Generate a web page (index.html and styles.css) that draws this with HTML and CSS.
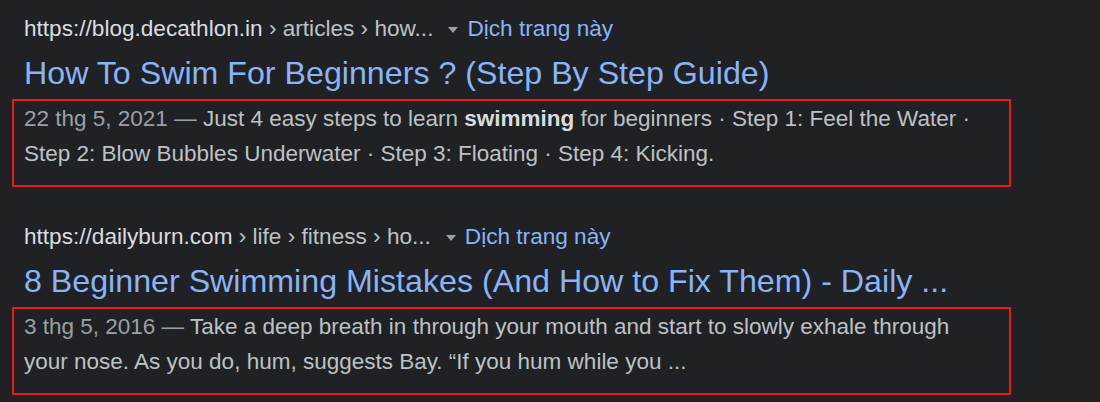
FILE: index.html
```html
<!DOCTYPE html>
<html lang="vi">
<head>
<meta charset="utf-8">
<link rel="stylesheet" href="styles.css">
</head>
<body>
<div class="results">
  <div class="result">
    <div class="cite"><span class="domain">https://blog.decathlon.in</span><span class="path"> › articles › how...</span><span class="caret"></span><a class="translate">Dịch trang này</a></div>
    <h3 class="title">How To Swim For Beginners ? (Step By Step Guide)</h3>
    <div class="snippet"><span class="date">22 thg 5, 2021 — </span>Just 4 easy steps to learn <b>swimming</b> for beginners · Step 1: Feel the Water · Step 2: Blow Bubbles Underwater · Step 3: Floating · Step 4: Kicking.</div>
  </div>
  <div class="result">
    <div class="cite"><span class="domain">https://dailyburn.com</span><span class="path"> › life › fitness › ho...</span><span class="caret"></span><a class="translate">Dịch trang này</a></div>
    <h3 class="title">8 Beginner Swimming Mistakes (And How to Fix Them) - Daily ...</h3>
    <div class="snippet"><span class="date">3 thg 5, 2016 — </span>Take a deep breath in through your mouth and start to slowly exhale through your nose. As you do, hum, suggests Bay. “If you hum while you ...</div>
  </div>
</div>
</body>
</html>
```

FILE: styles.css
```css
html, body {
  margin: 0;
  padding: 0;
  background: #202124;
  height: 100%;
}
body {
  font-family: "Liberation Sans", Arial, sans-serif;
  overflow: hidden;
}
.results {
  padding: 14px 0 0 12px;
  display: flex;
  flex-direction: column;
  gap: 35px;
}
.result {
  display: flex;
  flex-direction: column;
}
.cite {
  padding-left: 12px;
  font-size: 22.6px;
  line-height: 30px;
  height: 30px;
  white-space: nowrap;
  display: flex;
  align-items: center;
}
.domain {
  color: #dadce0;
  white-space: pre;
}
.path {
  color: #bdc1c6;
  white-space: pre;
}
.caret {
  display: inline-block;
  width: 0;
  height: 0;
  border-left: 5px solid transparent;
  border-right: 5px solid transparent;
  border-top: 6px solid #9aa0a6;
  margin: 1px 9px 0 15px;
}
.translate {
  color: #8ab4f8;
}
.title {
  margin: 9px 0 0 0;
  padding-left: 12px;
  font-weight: normal;
  font-size: 32.2px;
  line-height: 40px;
  color: #8ab4f8;
  white-space: nowrap;
}
.snippet {
  margin-top: 6px;
  width: 960px;
  height: 70px;
  padding: 0 25px 14px 10px;
  border: 2px solid #f01818;
  font-size: 22.5px;
  line-height: 35px;
  color: #bdc1c6;
}
.snippet b {
  color: #dadce0;
  font-weight: bold;
}
.date {
  color: #9aa0a6;
}
```
